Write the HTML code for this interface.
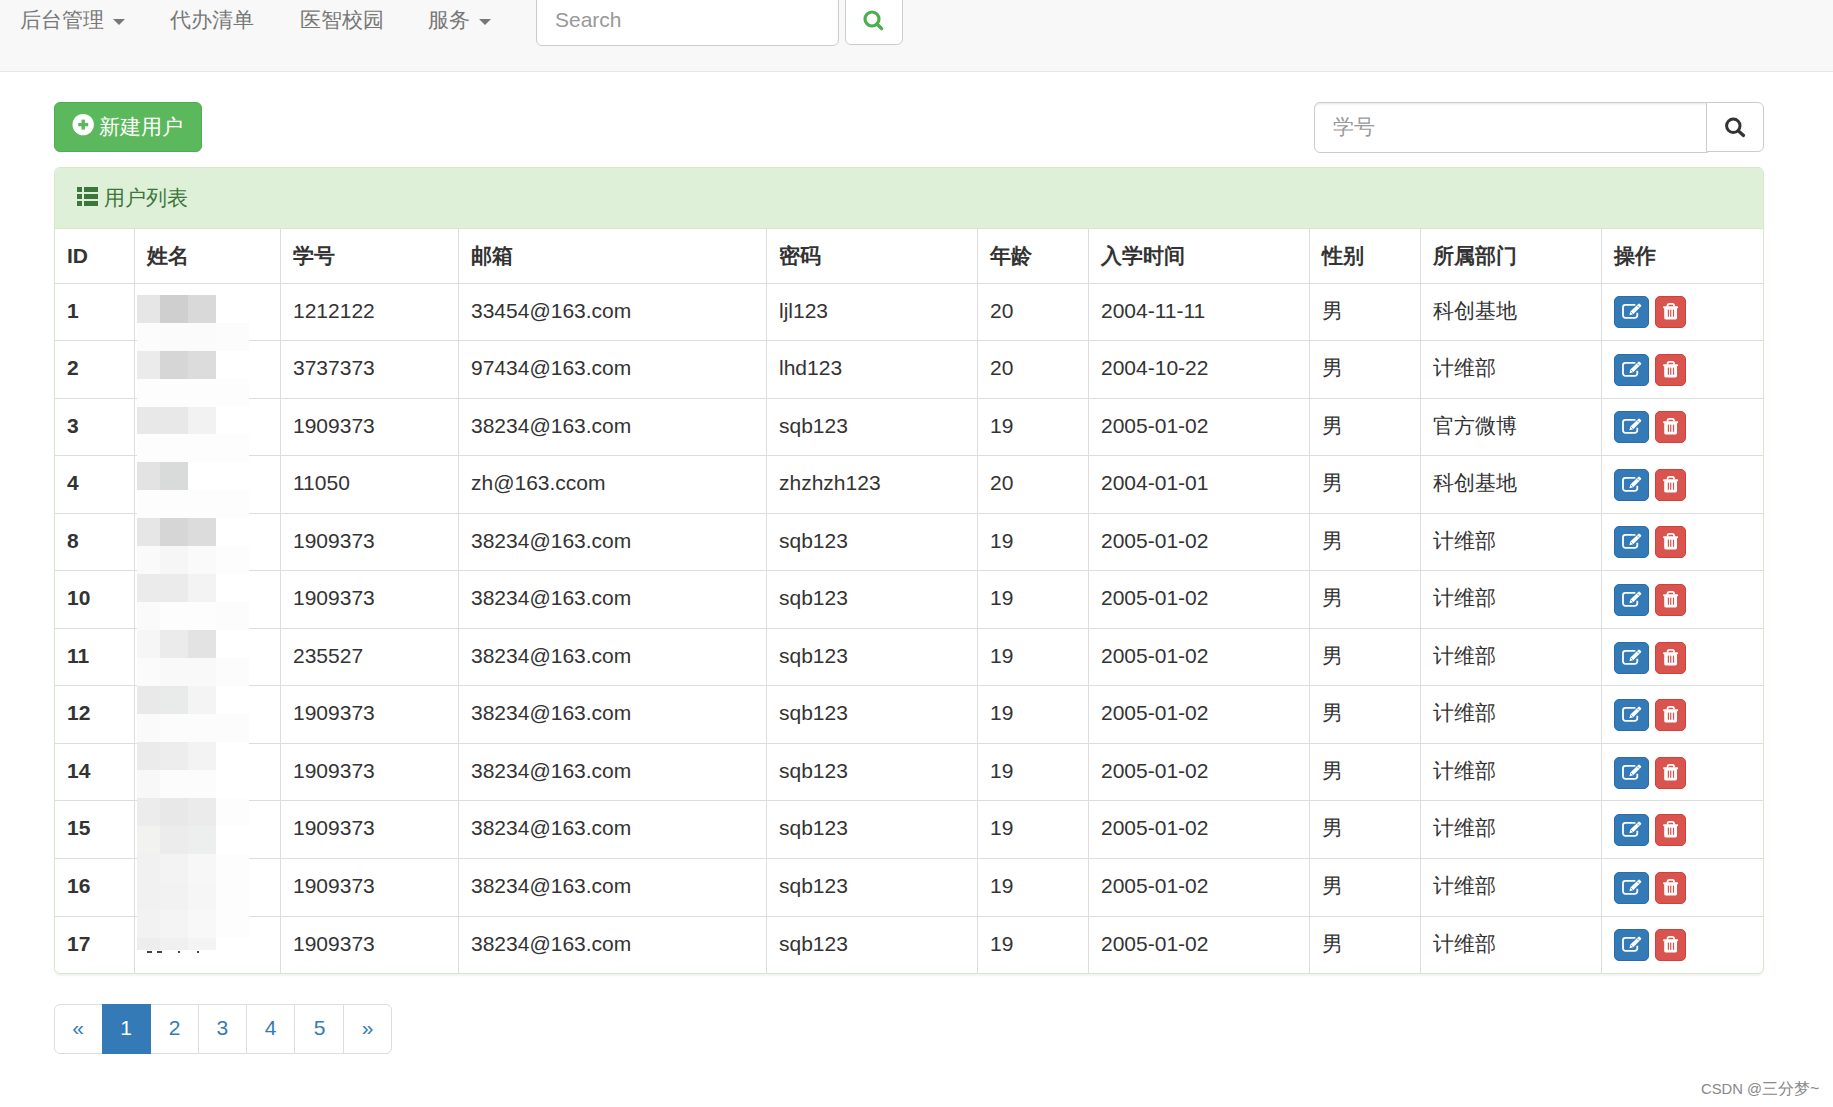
<!DOCTYPE html><html><head><meta charset="utf-8"><style>
*{margin:0;padding:0;box-sizing:border-box}
html,body{width:1833px;height:1107px;overflow:hidden;background:#fff}
body{font-family:"Liberation Sans",sans-serif;font-size:21px;color:#333;position:relative}
.a{position:absolute}
.nav{left:0;top:0;width:1833px;height:72px;background:#f8f8f8;border-bottom:1px solid #e7e7e7}
.ni{color:#777;font-size:21px;line-height:21px;top:9px;white-space:nowrap}
.caret{width:0;height:0;border-left:6px solid transparent;border-right:6px solid transparent;border-top:6px solid #777}
.inp{background:#fff;border:1.5px solid #ccc;border-radius:6px}
.sh{box-shadow:inset 0 1.5px 1.5px rgba(0,0,0,.075)}
.ph{color:#999;font-size:21px;line-height:21px;white-space:nowrap}
.btn-s{background:#5cb85c;border:1.5px solid #4cae4c;border-radius:6px}
.panel{left:54px;top:167px;width:1710px;height:807px;border:1px solid #d6e9c6;border-radius:6px;overflow:hidden;background:#fff;box-shadow:0 1.5px 1.5px rgba(0,0,0,.05)}
.ph2{left:0;top:0;width:100%;height:61px;background:#dff0d8;border-bottom:1px solid #d6e9c6}
.hl{height:1px;background:#ddd}
.vl{width:1px;background:#ddd}
.t{white-space:nowrap;line-height:21px}
.th{font-weight:bold}
.be{width:35px;height:32px;background:#337ab7;border:1px solid #2e6da4;border-radius:5px}
.bd{width:31px;height:32px;background:#d9534f;border:1px solid #d43f3a;border-radius:5px}
.pg{top:1004px;height:50px;border:1.5px solid #ddd;color:#337ab7;font-size:21px;text-align:center;line-height:47px}
</style></head><body>
<div class="a nav"></div>
<div class="a ni" style="left:20px">后台管理</div><div class="a caret" style="left:113px;top:19px"></div>
<div class="a ni" style="left:170px">代办清单</div>
<div class="a ni" style="left:300px">医智校园</div>
<div class="a ni" style="left:428px">服务</div><div class="a caret" style="left:479px;top:19px"></div>
<div class="a inp sh" style="left:536px;top:-10px;width:303px;height:56px"></div>
<div class="a ph" style="left:555px;top:9px">Search</div>
<div class="a inp" style="left:845px;top:-10px;width:58px;height:55px"></div>
<svg class="a" style="left:860px;top:8px" width="28" height="28" viewBox="0 0 28 28"><circle cx="12" cy="11" r="7" fill="none" stroke="#4cae4c" stroke-width="3.2"/><line x1="17" y1="16" x2="21.6" y2="20.6" stroke="#4cae4c" stroke-width="3.4" stroke-linecap="round"/></svg>
<div class="a btn-s" style="left:54px;top:102px;width:148px;height:50px"></div>
<svg class="a" style="left:72px;top:113px" width="23" height="23" viewBox="0 0 23 23"><circle cx="11.2" cy="11.6" r="10.7" fill="#fff"/><rect x="9.5" y="6.6" width="3.4" height="10" fill="#5cb85c"/><rect x="6.2" y="9.9" width="10" height="3.4" fill="#5cb85c"/></svg>
<div class="a t" style="left:99px;top:116px;color:#fff">新建用户</div>
<div class="a inp sh" style="left:1314px;top:102px;width:394px;height:51px;border-radius:6px 0 0 6px"></div>
<div class="a ph" style="left:1333px;top:116px">学号</div>
<div class="a inp" style="left:1706px;top:102px;width:58px;height:50px;border-radius:0 6px 6px 0"></div>
<svg class="a" style="left:1722px;top:114px" width="26" height="26" viewBox="0 0 26 26"><circle cx="11.3" cy="11.8" r="6.7" fill="none" stroke="#333" stroke-width="3"/><line x1="16.5" y1="17" x2="21.5" y2="21.5" stroke="#333" stroke-width="3.2" stroke-linecap="round"/></svg>
<div class="a panel">
<div class="a ph2"></div>
</div>
<svg class="a" style="left:77px;top:187px" width="22" height="20" viewBox="0 0 22 20"><g fill="#3c763d"><rect x="0" y="0" width="5" height="5"/><rect x="7" y="0" width="14" height="5"/><rect x="0" y="7" width="5" height="5"/><rect x="7" y="7" width="14" height="5"/><rect x="0" y="14" width="5" height="5"/><rect x="7" y="14" width="14" height="5"/></g></svg>
<div class="a t" style="left:104px;top:187px;color:#3c763d">用户列表</div>
<div class="a vl" style="left:134px;top:229px;height:744px"></div>
<div class="a vl" style="left:280px;top:229px;height:744px"></div>
<div class="a vl" style="left:458px;top:229px;height:744px"></div>
<div class="a vl" style="left:766px;top:229px;height:744px"></div>
<div class="a vl" style="left:977px;top:229px;height:744px"></div>
<div class="a vl" style="left:1088px;top:229px;height:744px"></div>
<div class="a vl" style="left:1309px;top:229px;height:744px"></div>
<div class="a vl" style="left:1420px;top:229px;height:744px"></div>
<div class="a vl" style="left:1601px;top:229px;height:744px"></div>
<div class="a hl" style="left:55px;top:283px;width:1708px"></div>
<div class="a hl" style="left:55px;top:340px;width:1708px"></div>
<div class="a hl" style="left:55px;top:398px;width:1708px"></div>
<div class="a hl" style="left:55px;top:455px;width:1708px"></div>
<div class="a hl" style="left:55px;top:513px;width:1708px"></div>
<div class="a hl" style="left:55px;top:570px;width:1708px"></div>
<div class="a hl" style="left:55px;top:628px;width:1708px"></div>
<div class="a hl" style="left:55px;top:685px;width:1708px"></div>
<div class="a hl" style="left:55px;top:743px;width:1708px"></div>
<div class="a hl" style="left:55px;top:800px;width:1708px"></div>
<div class="a hl" style="left:55px;top:858px;width:1708px"></div>
<div class="a hl" style="left:55px;top:916px;width:1708px"></div>
<div class="a t th" style="left:67px;top:245.0px">ID</div>
<div class="a t th" style="left:147px;top:245.0px">姓名</div>
<div class="a t th" style="left:293px;top:245.0px">学号</div>
<div class="a t th" style="left:471px;top:245.0px">邮箱</div>
<div class="a t th" style="left:779px;top:245.0px">密码</div>
<div class="a t th" style="left:990px;top:245.0px">年龄</div>
<div class="a t th" style="left:1101px;top:245.0px">入学时间</div>
<div class="a t th" style="left:1322px;top:245.0px">性别</div>
<div class="a t th" style="left:1433px;top:245.0px">所属部门</div>
<div class="a t th" style="left:1614px;top:245.0px">操作</div>
<div class="a t th" style="left:67px;top:300.2px">1</div>
<div class="a t" style="left:293px;top:300.2px">1212122</div>
<div class="a t" style="left:471px;top:300.2px">33454@163.com</div>
<div class="a t" style="left:779px;top:300.2px">ljl123</div>
<div class="a t" style="left:990px;top:300.2px">20</div>
<div class="a t" style="left:1101px;top:300.2px">2004-11-11</div>
<div class="a t" style="left:1322px;top:300.2px">男</div>
<div class="a t" style="left:1433px;top:300.2px">科创基地</div>
<div class="a be" style="left:1614px;top:296.0px"><svg class="a" style="left:-1px;top:-1px" width="35" height="32" viewBox="0 0 35 32"><path d="M21.4 8.9 H11.4 A2.4 2.4 0 0 0 9 11.3 V19.5 A2.4 2.4 0 0 0 11.4 21.9 H20.9 A2.4 2.4 0 0 0 23.3 19.5 V16.8" fill="none" stroke="#fff" stroke-width="1.8"/><path d="M15.4 19.2 L16.4 15.4 L24.2 7.9 A1.2 1.2 0 0 1 25.9 7.9 L26.9 8.9 A1.2 1.2 0 0 1 26.9 10.6 L19.2 18.2 Z" fill="#fff"/><line x1="17.2" y1="16.2" x2="18.6" y2="17.6" stroke="#337ab7" stroke-width="0.9"/><line x1="23.2" y1="9.6" x2="25.2" y2="11.6" stroke="#337ab7" stroke-width="0.8"/></svg></div>
<div class="a bd" style="left:1655px;top:296.0px"><svg class="a" style="left:-1px;top:-1px" width="31" height="32" viewBox="0 0 31 32"><rect x="8.1" y="10.3" width="15" height="2" rx="0.8" fill="#fff"/><path d="M12.6 10.5 V9.5 A1.6 1.6 0 0 1 14.2 7.9 H17.4 A1.6 1.6 0 0 1 19 9.5 V10.5" fill="none" stroke="#fff" stroke-width="1.8"/><path d="M9.2 12 H22 V22 A1.4 1.4 0 0 1 20.6 23.4 H10.6 A1.4 1.4 0 0 1 9.2 22 Z" fill="#fff"/><g fill="#d9534f"><rect x="12.8" y="13.6" width="1.2" height="7.2"/><rect x="15.1" y="13.6" width="1.2" height="7.2"/><rect x="17.9" y="13.6" width="1.2" height="7.2"/></g></svg></div>
<div class="a t th" style="left:67px;top:357.2px">2</div>
<div class="a t" style="left:293px;top:357.2px">3737373</div>
<div class="a t" style="left:471px;top:357.2px">97434@163.com</div>
<div class="a t" style="left:779px;top:357.2px">lhd123</div>
<div class="a t" style="left:990px;top:357.2px">20</div>
<div class="a t" style="left:1101px;top:357.2px">2004-10-22</div>
<div class="a t" style="left:1322px;top:357.2px">男</div>
<div class="a t" style="left:1433px;top:357.2px">计维部</div>
<div class="a be" style="left:1614px;top:354.0px"><svg class="a" style="left:-1px;top:-1px" width="35" height="32" viewBox="0 0 35 32"><path d="M21.4 8.9 H11.4 A2.4 2.4 0 0 0 9 11.3 V19.5 A2.4 2.4 0 0 0 11.4 21.9 H20.9 A2.4 2.4 0 0 0 23.3 19.5 V16.8" fill="none" stroke="#fff" stroke-width="1.8"/><path d="M15.4 19.2 L16.4 15.4 L24.2 7.9 A1.2 1.2 0 0 1 25.9 7.9 L26.9 8.9 A1.2 1.2 0 0 1 26.9 10.6 L19.2 18.2 Z" fill="#fff"/><line x1="17.2" y1="16.2" x2="18.6" y2="17.6" stroke="#337ab7" stroke-width="0.9"/><line x1="23.2" y1="9.6" x2="25.2" y2="11.6" stroke="#337ab7" stroke-width="0.8"/></svg></div>
<div class="a bd" style="left:1655px;top:354.0px"><svg class="a" style="left:-1px;top:-1px" width="31" height="32" viewBox="0 0 31 32"><rect x="8.1" y="10.3" width="15" height="2" rx="0.8" fill="#fff"/><path d="M12.6 10.5 V9.5 A1.6 1.6 0 0 1 14.2 7.9 H17.4 A1.6 1.6 0 0 1 19 9.5 V10.5" fill="none" stroke="#fff" stroke-width="1.8"/><path d="M9.2 12 H22 V22 A1.4 1.4 0 0 1 20.6 23.4 H10.6 A1.4 1.4 0 0 1 9.2 22 Z" fill="#fff"/><g fill="#d9534f"><rect x="12.8" y="13.6" width="1.2" height="7.2"/><rect x="15.1" y="13.6" width="1.2" height="7.2"/><rect x="17.9" y="13.6" width="1.2" height="7.2"/></g></svg></div>
<div class="a t th" style="left:67px;top:415.2px">3</div>
<div class="a t" style="left:293px;top:415.2px">1909373</div>
<div class="a t" style="left:471px;top:415.2px">38234@163.com</div>
<div class="a t" style="left:779px;top:415.2px">sqb123</div>
<div class="a t" style="left:990px;top:415.2px">19</div>
<div class="a t" style="left:1101px;top:415.2px">2005-01-02</div>
<div class="a t" style="left:1322px;top:415.2px">男</div>
<div class="a t" style="left:1433px;top:415.2px">官方微博</div>
<div class="a be" style="left:1614px;top:411.0px"><svg class="a" style="left:-1px;top:-1px" width="35" height="32" viewBox="0 0 35 32"><path d="M21.4 8.9 H11.4 A2.4 2.4 0 0 0 9 11.3 V19.5 A2.4 2.4 0 0 0 11.4 21.9 H20.9 A2.4 2.4 0 0 0 23.3 19.5 V16.8" fill="none" stroke="#fff" stroke-width="1.8"/><path d="M15.4 19.2 L16.4 15.4 L24.2 7.9 A1.2 1.2 0 0 1 25.9 7.9 L26.9 8.9 A1.2 1.2 0 0 1 26.9 10.6 L19.2 18.2 Z" fill="#fff"/><line x1="17.2" y1="16.2" x2="18.6" y2="17.6" stroke="#337ab7" stroke-width="0.9"/><line x1="23.2" y1="9.6" x2="25.2" y2="11.6" stroke="#337ab7" stroke-width="0.8"/></svg></div>
<div class="a bd" style="left:1655px;top:411.0px"><svg class="a" style="left:-1px;top:-1px" width="31" height="32" viewBox="0 0 31 32"><rect x="8.1" y="10.3" width="15" height="2" rx="0.8" fill="#fff"/><path d="M12.6 10.5 V9.5 A1.6 1.6 0 0 1 14.2 7.9 H17.4 A1.6 1.6 0 0 1 19 9.5 V10.5" fill="none" stroke="#fff" stroke-width="1.8"/><path d="M9.2 12 H22 V22 A1.4 1.4 0 0 1 20.6 23.4 H10.6 A1.4 1.4 0 0 1 9.2 22 Z" fill="#fff"/><g fill="#d9534f"><rect x="12.8" y="13.6" width="1.2" height="7.2"/><rect x="15.1" y="13.6" width="1.2" height="7.2"/><rect x="17.9" y="13.6" width="1.2" height="7.2"/></g></svg></div>
<div class="a t th" style="left:67px;top:472.2px">4</div>
<div class="a t" style="left:293px;top:472.2px">11050</div>
<div class="a t" style="left:471px;top:472.2px">zh@163.ccom</div>
<div class="a t" style="left:779px;top:472.2px">zhzhzh123</div>
<div class="a t" style="left:990px;top:472.2px">20</div>
<div class="a t" style="left:1101px;top:472.2px">2004-01-01</div>
<div class="a t" style="left:1322px;top:472.2px">男</div>
<div class="a t" style="left:1433px;top:472.2px">科创基地</div>
<div class="a be" style="left:1614px;top:469.0px"><svg class="a" style="left:-1px;top:-1px" width="35" height="32" viewBox="0 0 35 32"><path d="M21.4 8.9 H11.4 A2.4 2.4 0 0 0 9 11.3 V19.5 A2.4 2.4 0 0 0 11.4 21.9 H20.9 A2.4 2.4 0 0 0 23.3 19.5 V16.8" fill="none" stroke="#fff" stroke-width="1.8"/><path d="M15.4 19.2 L16.4 15.4 L24.2 7.9 A1.2 1.2 0 0 1 25.9 7.9 L26.9 8.9 A1.2 1.2 0 0 1 26.9 10.6 L19.2 18.2 Z" fill="#fff"/><line x1="17.2" y1="16.2" x2="18.6" y2="17.6" stroke="#337ab7" stroke-width="0.9"/><line x1="23.2" y1="9.6" x2="25.2" y2="11.6" stroke="#337ab7" stroke-width="0.8"/></svg></div>
<div class="a bd" style="left:1655px;top:469.0px"><svg class="a" style="left:-1px;top:-1px" width="31" height="32" viewBox="0 0 31 32"><rect x="8.1" y="10.3" width="15" height="2" rx="0.8" fill="#fff"/><path d="M12.6 10.5 V9.5 A1.6 1.6 0 0 1 14.2 7.9 H17.4 A1.6 1.6 0 0 1 19 9.5 V10.5" fill="none" stroke="#fff" stroke-width="1.8"/><path d="M9.2 12 H22 V22 A1.4 1.4 0 0 1 20.6 23.4 H10.6 A1.4 1.4 0 0 1 9.2 22 Z" fill="#fff"/><g fill="#d9534f"><rect x="12.8" y="13.6" width="1.2" height="7.2"/><rect x="15.1" y="13.6" width="1.2" height="7.2"/><rect x="17.9" y="13.6" width="1.2" height="7.2"/></g></svg></div>
<div class="a t th" style="left:67px;top:530.2px">8</div>
<div class="a t" style="left:293px;top:530.2px">1909373</div>
<div class="a t" style="left:471px;top:530.2px">38234@163.com</div>
<div class="a t" style="left:779px;top:530.2px">sqb123</div>
<div class="a t" style="left:990px;top:530.2px">19</div>
<div class="a t" style="left:1101px;top:530.2px">2005-01-02</div>
<div class="a t" style="left:1322px;top:530.2px">男</div>
<div class="a t" style="left:1433px;top:530.2px">计维部</div>
<div class="a be" style="left:1614px;top:526.0px"><svg class="a" style="left:-1px;top:-1px" width="35" height="32" viewBox="0 0 35 32"><path d="M21.4 8.9 H11.4 A2.4 2.4 0 0 0 9 11.3 V19.5 A2.4 2.4 0 0 0 11.4 21.9 H20.9 A2.4 2.4 0 0 0 23.3 19.5 V16.8" fill="none" stroke="#fff" stroke-width="1.8"/><path d="M15.4 19.2 L16.4 15.4 L24.2 7.9 A1.2 1.2 0 0 1 25.9 7.9 L26.9 8.9 A1.2 1.2 0 0 1 26.9 10.6 L19.2 18.2 Z" fill="#fff"/><line x1="17.2" y1="16.2" x2="18.6" y2="17.6" stroke="#337ab7" stroke-width="0.9"/><line x1="23.2" y1="9.6" x2="25.2" y2="11.6" stroke="#337ab7" stroke-width="0.8"/></svg></div>
<div class="a bd" style="left:1655px;top:526.0px"><svg class="a" style="left:-1px;top:-1px" width="31" height="32" viewBox="0 0 31 32"><rect x="8.1" y="10.3" width="15" height="2" rx="0.8" fill="#fff"/><path d="M12.6 10.5 V9.5 A1.6 1.6 0 0 1 14.2 7.9 H17.4 A1.6 1.6 0 0 1 19 9.5 V10.5" fill="none" stroke="#fff" stroke-width="1.8"/><path d="M9.2 12 H22 V22 A1.4 1.4 0 0 1 20.6 23.4 H10.6 A1.4 1.4 0 0 1 9.2 22 Z" fill="#fff"/><g fill="#d9534f"><rect x="12.8" y="13.6" width="1.2" height="7.2"/><rect x="15.1" y="13.6" width="1.2" height="7.2"/><rect x="17.9" y="13.6" width="1.2" height="7.2"/></g></svg></div>
<div class="a t th" style="left:67px;top:587.2px">10</div>
<div class="a t" style="left:293px;top:587.2px">1909373</div>
<div class="a t" style="left:471px;top:587.2px">38234@163.com</div>
<div class="a t" style="left:779px;top:587.2px">sqb123</div>
<div class="a t" style="left:990px;top:587.2px">19</div>
<div class="a t" style="left:1101px;top:587.2px">2005-01-02</div>
<div class="a t" style="left:1322px;top:587.2px">男</div>
<div class="a t" style="left:1433px;top:587.2px">计维部</div>
<div class="a be" style="left:1614px;top:584.0px"><svg class="a" style="left:-1px;top:-1px" width="35" height="32" viewBox="0 0 35 32"><path d="M21.4 8.9 H11.4 A2.4 2.4 0 0 0 9 11.3 V19.5 A2.4 2.4 0 0 0 11.4 21.9 H20.9 A2.4 2.4 0 0 0 23.3 19.5 V16.8" fill="none" stroke="#fff" stroke-width="1.8"/><path d="M15.4 19.2 L16.4 15.4 L24.2 7.9 A1.2 1.2 0 0 1 25.9 7.9 L26.9 8.9 A1.2 1.2 0 0 1 26.9 10.6 L19.2 18.2 Z" fill="#fff"/><line x1="17.2" y1="16.2" x2="18.6" y2="17.6" stroke="#337ab7" stroke-width="0.9"/><line x1="23.2" y1="9.6" x2="25.2" y2="11.6" stroke="#337ab7" stroke-width="0.8"/></svg></div>
<div class="a bd" style="left:1655px;top:584.0px"><svg class="a" style="left:-1px;top:-1px" width="31" height="32" viewBox="0 0 31 32"><rect x="8.1" y="10.3" width="15" height="2" rx="0.8" fill="#fff"/><path d="M12.6 10.5 V9.5 A1.6 1.6 0 0 1 14.2 7.9 H17.4 A1.6 1.6 0 0 1 19 9.5 V10.5" fill="none" stroke="#fff" stroke-width="1.8"/><path d="M9.2 12 H22 V22 A1.4 1.4 0 0 1 20.6 23.4 H10.6 A1.4 1.4 0 0 1 9.2 22 Z" fill="#fff"/><g fill="#d9534f"><rect x="12.8" y="13.6" width="1.2" height="7.2"/><rect x="15.1" y="13.6" width="1.2" height="7.2"/><rect x="17.9" y="13.6" width="1.2" height="7.2"/></g></svg></div>
<div class="a t th" style="left:67px;top:645.2px">11</div>
<div class="a t" style="left:293px;top:645.2px">235527</div>
<div class="a t" style="left:471px;top:645.2px">38234@163.com</div>
<div class="a t" style="left:779px;top:645.2px">sqb123</div>
<div class="a t" style="left:990px;top:645.2px">19</div>
<div class="a t" style="left:1101px;top:645.2px">2005-01-02</div>
<div class="a t" style="left:1322px;top:645.2px">男</div>
<div class="a t" style="left:1433px;top:645.2px">计维部</div>
<div class="a be" style="left:1614px;top:642.0px"><svg class="a" style="left:-1px;top:-1px" width="35" height="32" viewBox="0 0 35 32"><path d="M21.4 8.9 H11.4 A2.4 2.4 0 0 0 9 11.3 V19.5 A2.4 2.4 0 0 0 11.4 21.9 H20.9 A2.4 2.4 0 0 0 23.3 19.5 V16.8" fill="none" stroke="#fff" stroke-width="1.8"/><path d="M15.4 19.2 L16.4 15.4 L24.2 7.9 A1.2 1.2 0 0 1 25.9 7.9 L26.9 8.9 A1.2 1.2 0 0 1 26.9 10.6 L19.2 18.2 Z" fill="#fff"/><line x1="17.2" y1="16.2" x2="18.6" y2="17.6" stroke="#337ab7" stroke-width="0.9"/><line x1="23.2" y1="9.6" x2="25.2" y2="11.6" stroke="#337ab7" stroke-width="0.8"/></svg></div>
<div class="a bd" style="left:1655px;top:642.0px"><svg class="a" style="left:-1px;top:-1px" width="31" height="32" viewBox="0 0 31 32"><rect x="8.1" y="10.3" width="15" height="2" rx="0.8" fill="#fff"/><path d="M12.6 10.5 V9.5 A1.6 1.6 0 0 1 14.2 7.9 H17.4 A1.6 1.6 0 0 1 19 9.5 V10.5" fill="none" stroke="#fff" stroke-width="1.8"/><path d="M9.2 12 H22 V22 A1.4 1.4 0 0 1 20.6 23.4 H10.6 A1.4 1.4 0 0 1 9.2 22 Z" fill="#fff"/><g fill="#d9534f"><rect x="12.8" y="13.6" width="1.2" height="7.2"/><rect x="15.1" y="13.6" width="1.2" height="7.2"/><rect x="17.9" y="13.6" width="1.2" height="7.2"/></g></svg></div>
<div class="a t th" style="left:67px;top:702.2px">12</div>
<div class="a t" style="left:293px;top:702.2px">1909373</div>
<div class="a t" style="left:471px;top:702.2px">38234@163.com</div>
<div class="a t" style="left:779px;top:702.2px">sqb123</div>
<div class="a t" style="left:990px;top:702.2px">19</div>
<div class="a t" style="left:1101px;top:702.2px">2005-01-02</div>
<div class="a t" style="left:1322px;top:702.2px">男</div>
<div class="a t" style="left:1433px;top:702.2px">计维部</div>
<div class="a be" style="left:1614px;top:699.0px"><svg class="a" style="left:-1px;top:-1px" width="35" height="32" viewBox="0 0 35 32"><path d="M21.4 8.9 H11.4 A2.4 2.4 0 0 0 9 11.3 V19.5 A2.4 2.4 0 0 0 11.4 21.9 H20.9 A2.4 2.4 0 0 0 23.3 19.5 V16.8" fill="none" stroke="#fff" stroke-width="1.8"/><path d="M15.4 19.2 L16.4 15.4 L24.2 7.9 A1.2 1.2 0 0 1 25.9 7.9 L26.9 8.9 A1.2 1.2 0 0 1 26.9 10.6 L19.2 18.2 Z" fill="#fff"/><line x1="17.2" y1="16.2" x2="18.6" y2="17.6" stroke="#337ab7" stroke-width="0.9"/><line x1="23.2" y1="9.6" x2="25.2" y2="11.6" stroke="#337ab7" stroke-width="0.8"/></svg></div>
<div class="a bd" style="left:1655px;top:699.0px"><svg class="a" style="left:-1px;top:-1px" width="31" height="32" viewBox="0 0 31 32"><rect x="8.1" y="10.3" width="15" height="2" rx="0.8" fill="#fff"/><path d="M12.6 10.5 V9.5 A1.6 1.6 0 0 1 14.2 7.9 H17.4 A1.6 1.6 0 0 1 19 9.5 V10.5" fill="none" stroke="#fff" stroke-width="1.8"/><path d="M9.2 12 H22 V22 A1.4 1.4 0 0 1 20.6 23.4 H10.6 A1.4 1.4 0 0 1 9.2 22 Z" fill="#fff"/><g fill="#d9534f"><rect x="12.8" y="13.6" width="1.2" height="7.2"/><rect x="15.1" y="13.6" width="1.2" height="7.2"/><rect x="17.9" y="13.6" width="1.2" height="7.2"/></g></svg></div>
<div class="a t th" style="left:67px;top:760.2px">14</div>
<div class="a t" style="left:293px;top:760.2px">1909373</div>
<div class="a t" style="left:471px;top:760.2px">38234@163.com</div>
<div class="a t" style="left:779px;top:760.2px">sqb123</div>
<div class="a t" style="left:990px;top:760.2px">19</div>
<div class="a t" style="left:1101px;top:760.2px">2005-01-02</div>
<div class="a t" style="left:1322px;top:760.2px">男</div>
<div class="a t" style="left:1433px;top:760.2px">计维部</div>
<div class="a be" style="left:1614px;top:757.0px"><svg class="a" style="left:-1px;top:-1px" width="35" height="32" viewBox="0 0 35 32"><path d="M21.4 8.9 H11.4 A2.4 2.4 0 0 0 9 11.3 V19.5 A2.4 2.4 0 0 0 11.4 21.9 H20.9 A2.4 2.4 0 0 0 23.3 19.5 V16.8" fill="none" stroke="#fff" stroke-width="1.8"/><path d="M15.4 19.2 L16.4 15.4 L24.2 7.9 A1.2 1.2 0 0 1 25.9 7.9 L26.9 8.9 A1.2 1.2 0 0 1 26.9 10.6 L19.2 18.2 Z" fill="#fff"/><line x1="17.2" y1="16.2" x2="18.6" y2="17.6" stroke="#337ab7" stroke-width="0.9"/><line x1="23.2" y1="9.6" x2="25.2" y2="11.6" stroke="#337ab7" stroke-width="0.8"/></svg></div>
<div class="a bd" style="left:1655px;top:757.0px"><svg class="a" style="left:-1px;top:-1px" width="31" height="32" viewBox="0 0 31 32"><rect x="8.1" y="10.3" width="15" height="2" rx="0.8" fill="#fff"/><path d="M12.6 10.5 V9.5 A1.6 1.6 0 0 1 14.2 7.9 H17.4 A1.6 1.6 0 0 1 19 9.5 V10.5" fill="none" stroke="#fff" stroke-width="1.8"/><path d="M9.2 12 H22 V22 A1.4 1.4 0 0 1 20.6 23.4 H10.6 A1.4 1.4 0 0 1 9.2 22 Z" fill="#fff"/><g fill="#d9534f"><rect x="12.8" y="13.6" width="1.2" height="7.2"/><rect x="15.1" y="13.6" width="1.2" height="7.2"/><rect x="17.9" y="13.6" width="1.2" height="7.2"/></g></svg></div>
<div class="a t th" style="left:67px;top:817.2px">15</div>
<div class="a t" style="left:293px;top:817.2px">1909373</div>
<div class="a t" style="left:471px;top:817.2px">38234@163.com</div>
<div class="a t" style="left:779px;top:817.2px">sqb123</div>
<div class="a t" style="left:990px;top:817.2px">19</div>
<div class="a t" style="left:1101px;top:817.2px">2005-01-02</div>
<div class="a t" style="left:1322px;top:817.2px">男</div>
<div class="a t" style="left:1433px;top:817.2px">计维部</div>
<div class="a be" style="left:1614px;top:814.0px"><svg class="a" style="left:-1px;top:-1px" width="35" height="32" viewBox="0 0 35 32"><path d="M21.4 8.9 H11.4 A2.4 2.4 0 0 0 9 11.3 V19.5 A2.4 2.4 0 0 0 11.4 21.9 H20.9 A2.4 2.4 0 0 0 23.3 19.5 V16.8" fill="none" stroke="#fff" stroke-width="1.8"/><path d="M15.4 19.2 L16.4 15.4 L24.2 7.9 A1.2 1.2 0 0 1 25.9 7.9 L26.9 8.9 A1.2 1.2 0 0 1 26.9 10.6 L19.2 18.2 Z" fill="#fff"/><line x1="17.2" y1="16.2" x2="18.6" y2="17.6" stroke="#337ab7" stroke-width="0.9"/><line x1="23.2" y1="9.6" x2="25.2" y2="11.6" stroke="#337ab7" stroke-width="0.8"/></svg></div>
<div class="a bd" style="left:1655px;top:814.0px"><svg class="a" style="left:-1px;top:-1px" width="31" height="32" viewBox="0 0 31 32"><rect x="8.1" y="10.3" width="15" height="2" rx="0.8" fill="#fff"/><path d="M12.6 10.5 V9.5 A1.6 1.6 0 0 1 14.2 7.9 H17.4 A1.6 1.6 0 0 1 19 9.5 V10.5" fill="none" stroke="#fff" stroke-width="1.8"/><path d="M9.2 12 H22 V22 A1.4 1.4 0 0 1 20.6 23.4 H10.6 A1.4 1.4 0 0 1 9.2 22 Z" fill="#fff"/><g fill="#d9534f"><rect x="12.8" y="13.6" width="1.2" height="7.2"/><rect x="15.1" y="13.6" width="1.2" height="7.2"/><rect x="17.9" y="13.6" width="1.2" height="7.2"/></g></svg></div>
<div class="a t th" style="left:67px;top:875.2px">16</div>
<div class="a t" style="left:293px;top:875.2px">1909373</div>
<div class="a t" style="left:471px;top:875.2px">38234@163.com</div>
<div class="a t" style="left:779px;top:875.2px">sqb123</div>
<div class="a t" style="left:990px;top:875.2px">19</div>
<div class="a t" style="left:1101px;top:875.2px">2005-01-02</div>
<div class="a t" style="left:1322px;top:875.2px">男</div>
<div class="a t" style="left:1433px;top:875.2px">计维部</div>
<div class="a be" style="left:1614px;top:872.0px"><svg class="a" style="left:-1px;top:-1px" width="35" height="32" viewBox="0 0 35 32"><path d="M21.4 8.9 H11.4 A2.4 2.4 0 0 0 9 11.3 V19.5 A2.4 2.4 0 0 0 11.4 21.9 H20.9 A2.4 2.4 0 0 0 23.3 19.5 V16.8" fill="none" stroke="#fff" stroke-width="1.8"/><path d="M15.4 19.2 L16.4 15.4 L24.2 7.9 A1.2 1.2 0 0 1 25.9 7.9 L26.9 8.9 A1.2 1.2 0 0 1 26.9 10.6 L19.2 18.2 Z" fill="#fff"/><line x1="17.2" y1="16.2" x2="18.6" y2="17.6" stroke="#337ab7" stroke-width="0.9"/><line x1="23.2" y1="9.6" x2="25.2" y2="11.6" stroke="#337ab7" stroke-width="0.8"/></svg></div>
<div class="a bd" style="left:1655px;top:872.0px"><svg class="a" style="left:-1px;top:-1px" width="31" height="32" viewBox="0 0 31 32"><rect x="8.1" y="10.3" width="15" height="2" rx="0.8" fill="#fff"/><path d="M12.6 10.5 V9.5 A1.6 1.6 0 0 1 14.2 7.9 H17.4 A1.6 1.6 0 0 1 19 9.5 V10.5" fill="none" stroke="#fff" stroke-width="1.8"/><path d="M9.2 12 H22 V22 A1.4 1.4 0 0 1 20.6 23.4 H10.6 A1.4 1.4 0 0 1 9.2 22 Z" fill="#fff"/><g fill="#d9534f"><rect x="12.8" y="13.6" width="1.2" height="7.2"/><rect x="15.1" y="13.6" width="1.2" height="7.2"/><rect x="17.9" y="13.6" width="1.2" height="7.2"/></g></svg></div>
<div class="a t th" style="left:67px;top:933.2px">17</div>
<div class="a t" style="left:293px;top:933.2px">1909373</div>
<div class="a t" style="left:471px;top:933.2px">38234@163.com</div>
<div class="a t" style="left:779px;top:933.2px">sqb123</div>
<div class="a t" style="left:990px;top:933.2px">19</div>
<div class="a t" style="left:1101px;top:933.2px">2005-01-02</div>
<div class="a t" style="left:1322px;top:933.2px">男</div>
<div class="a t" style="left:1433px;top:933.2px">计维部</div>
<div class="a be" style="left:1614px;top:929.0px"><svg class="a" style="left:-1px;top:-1px" width="35" height="32" viewBox="0 0 35 32"><path d="M21.4 8.9 H11.4 A2.4 2.4 0 0 0 9 11.3 V19.5 A2.4 2.4 0 0 0 11.4 21.9 H20.9 A2.4 2.4 0 0 0 23.3 19.5 V16.8" fill="none" stroke="#fff" stroke-width="1.8"/><path d="M15.4 19.2 L16.4 15.4 L24.2 7.9 A1.2 1.2 0 0 1 25.9 7.9 L26.9 8.9 A1.2 1.2 0 0 1 26.9 10.6 L19.2 18.2 Z" fill="#fff"/><line x1="17.2" y1="16.2" x2="18.6" y2="17.6" stroke="#337ab7" stroke-width="0.9"/><line x1="23.2" y1="9.6" x2="25.2" y2="11.6" stroke="#337ab7" stroke-width="0.8"/></svg></div>
<div class="a bd" style="left:1655px;top:929.0px"><svg class="a" style="left:-1px;top:-1px" width="31" height="32" viewBox="0 0 31 32"><rect x="8.1" y="10.3" width="15" height="2" rx="0.8" fill="#fff"/><path d="M12.6 10.5 V9.5 A1.6 1.6 0 0 1 14.2 7.9 H17.4 A1.6 1.6 0 0 1 19 9.5 V10.5" fill="none" stroke="#fff" stroke-width="1.8"/><path d="M9.2 12 H22 V22 A1.4 1.4 0 0 1 20.6 23.4 H10.6 A1.4 1.4 0 0 1 9.2 22 Z" fill="#fff"/><g fill="#d9534f"><rect x="12.8" y="13.6" width="1.2" height="7.2"/><rect x="15.1" y="13.6" width="1.2" height="7.2"/><rect x="17.9" y="13.6" width="1.2" height="7.2"/></g></svg></div>
<div class="a" style="left:137px;top:294.7px;width:23px;height:28.4px;background:#e6e6e6"></div>
<div class="a" style="left:160px;top:294.7px;width:28px;height:28.4px;background:#cfcfcf"></div>
<div class="a" style="left:188px;top:294.7px;width:28px;height:28.4px;background:#d9d9d9"></div>
<div class="a" style="left:216px;top:294.7px;width:33px;height:28.4px;background:#ffffff"></div>
<div class="a" style="left:137px;top:322.6px;width:23px;height:28.4px;background:#fcfcfc"></div>
<div class="a" style="left:160px;top:322.6px;width:28px;height:28.4px;background:#fbfbfb"></div>
<div class="a" style="left:188px;top:322.6px;width:28px;height:28.4px;background:#fbfbfb"></div>
<div class="a" style="left:216px;top:322.6px;width:33px;height:28.4px;background:#fcfcfc"></div>
<div class="a" style="left:137px;top:350.6px;width:23px;height:28.4px;background:#ebebeb"></div>
<div class="a" style="left:160px;top:350.6px;width:28px;height:28.4px;background:#d6d6d6"></div>
<div class="a" style="left:188px;top:350.6px;width:28px;height:28.4px;background:#dcdcdc"></div>
<div class="a" style="left:216px;top:350.6px;width:33px;height:28.4px;background:#ffffff"></div>
<div class="a" style="left:137px;top:378.5px;width:23px;height:28.4px;background:#fdfdfd"></div>
<div class="a" style="left:160px;top:378.5px;width:28px;height:28.4px;background:#fdfdfd"></div>
<div class="a" style="left:188px;top:378.5px;width:28px;height:28.4px;background:#fdfdfd"></div>
<div class="a" style="left:216px;top:378.5px;width:33px;height:28.4px;background:#fdfdfd"></div>
<div class="a" style="left:137px;top:406.5px;width:23px;height:28.4px;background:#e8e8e8"></div>
<div class="a" style="left:160px;top:406.5px;width:28px;height:28.4px;background:#e8e8e8"></div>
<div class="a" style="left:188px;top:406.5px;width:28px;height:28.4px;background:#f2f2f2"></div>
<div class="a" style="left:216px;top:406.5px;width:33px;height:28.4px;background:#ffffff"></div>
<div class="a" style="left:137px;top:434.4px;width:23px;height:28.4px;background:#fdfdfd"></div>
<div class="a" style="left:160px;top:434.4px;width:28px;height:28.4px;background:#fdfdfd"></div>
<div class="a" style="left:188px;top:434.4px;width:28px;height:28.4px;background:#fdfdfd"></div>
<div class="a" style="left:216px;top:434.4px;width:33px;height:28.4px;background:#fdfdfd"></div>
<div class="a" style="left:137px;top:462.4px;width:23px;height:28.4px;background:#e3e3e3"></div>
<div class="a" style="left:160px;top:462.4px;width:28px;height:28.4px;background:#d9dada"></div>
<div class="a" style="left:188px;top:462.4px;width:28px;height:28.4px;background:#ffffff"></div>
<div class="a" style="left:216px;top:462.4px;width:33px;height:28.4px;background:#ffffff"></div>
<div class="a" style="left:137px;top:490.4px;width:23px;height:28.4px;background:#fdfdfd"></div>
<div class="a" style="left:160px;top:490.4px;width:28px;height:28.4px;background:#fdfdfd"></div>
<div class="a" style="left:188px;top:490.4px;width:28px;height:28.4px;background:#fdfdfd"></div>
<div class="a" style="left:216px;top:490.4px;width:33px;height:28.4px;background:#fdfdfd"></div>
<div class="a" style="left:137px;top:518.3px;width:23px;height:28.4px;background:#e6e6e6"></div>
<div class="a" style="left:160px;top:518.3px;width:28px;height:28.4px;background:#d6d6d6"></div>
<div class="a" style="left:188px;top:518.3px;width:28px;height:28.4px;background:#dcdcdc"></div>
<div class="a" style="left:216px;top:518.3px;width:33px;height:28.4px;background:#ffffff"></div>
<div class="a" style="left:137px;top:546.2px;width:23px;height:28.4px;background:#fafafa"></div>
<div class="a" style="left:160px;top:546.2px;width:28px;height:28.4px;background:#f6f6f6"></div>
<div class="a" style="left:188px;top:546.2px;width:28px;height:28.4px;background:#fafafa"></div>
<div class="a" style="left:216px;top:546.2px;width:33px;height:28.4px;background:#fdfdfd"></div>
<div class="a" style="left:137px;top:574.2px;width:23px;height:28.4px;background:#ebebeb"></div>
<div class="a" style="left:160px;top:574.2px;width:28px;height:28.4px;background:#ebebeb"></div>
<div class="a" style="left:188px;top:574.2px;width:28px;height:28.4px;background:#f3f3f3"></div>
<div class="a" style="left:216px;top:574.2px;width:33px;height:28.4px;background:#ffffff"></div>
<div class="a" style="left:137px;top:602.1px;width:23px;height:28.4px;background:#fafafa"></div>
<div class="a" style="left:160px;top:602.1px;width:28px;height:28.4px;background:#fdfdfd"></div>
<div class="a" style="left:188px;top:602.1px;width:28px;height:28.4px;background:#fdfdfd"></div>
<div class="a" style="left:216px;top:602.1px;width:33px;height:28.4px;background:#fcfcfc"></div>
<div class="a" style="left:137px;top:630.1px;width:23px;height:28.4px;background:#f6f6f6"></div>
<div class="a" style="left:160px;top:630.1px;width:28px;height:28.4px;background:#ebebeb"></div>
<div class="a" style="left:188px;top:630.1px;width:28px;height:28.4px;background:#e3e3e3"></div>
<div class="a" style="left:216px;top:630.1px;width:33px;height:28.4px;background:#ffffff"></div>
<div class="a" style="left:137px;top:658.0px;width:23px;height:28.4px;background:#fbfbfb"></div>
<div class="a" style="left:160px;top:658.0px;width:28px;height:28.4px;background:#f9f9f9"></div>
<div class="a" style="left:188px;top:658.0px;width:28px;height:28.4px;background:#f9f9f9"></div>
<div class="a" style="left:216px;top:658.0px;width:33px;height:28.4px;background:#fcfcfc"></div>
<div class="a" style="left:137px;top:686.0px;width:23px;height:28.4px;background:#e9e9e9"></div>
<div class="a" style="left:160px;top:686.0px;width:28px;height:28.4px;background:#e9eaea"></div>
<div class="a" style="left:188px;top:686.0px;width:28px;height:28.4px;background:#f4f4f4"></div>
<div class="a" style="left:216px;top:686.0px;width:33px;height:28.4px;background:#ffffff"></div>
<div class="a" style="left:137px;top:714.0px;width:23px;height:28.4px;background:#fafafa"></div>
<div class="a" style="left:160px;top:714.0px;width:28px;height:28.4px;background:#fcfcfc"></div>
<div class="a" style="left:188px;top:714.0px;width:28px;height:28.4px;background:#fcfcfc"></div>
<div class="a" style="left:216px;top:714.0px;width:33px;height:28.4px;background:#fcfcfc"></div>
<div class="a" style="left:137px;top:741.9px;width:23px;height:28.4px;background:#ebebeb"></div>
<div class="a" style="left:160px;top:741.9px;width:28px;height:28.4px;background:#ededed"></div>
<div class="a" style="left:188px;top:741.9px;width:28px;height:28.4px;background:#f3f3f3"></div>
<div class="a" style="left:216px;top:741.9px;width:33px;height:28.4px;background:#ffffff"></div>
<div class="a" style="left:137px;top:769.8px;width:23px;height:28.4px;background:#f8f8f8"></div>
<div class="a" style="left:160px;top:769.8px;width:28px;height:28.4px;background:#fcfcfc"></div>
<div class="a" style="left:188px;top:769.8px;width:28px;height:28.4px;background:#fcfcfc"></div>
<div class="a" style="left:216px;top:769.8px;width:33px;height:28.4px;background:#ffffff"></div>
<div class="a" style="left:137px;top:797.8px;width:23px;height:28.4px;background:#ececec"></div>
<div class="a" style="left:160px;top:797.8px;width:28px;height:28.4px;background:#e8e8e8"></div>
<div class="a" style="left:188px;top:797.8px;width:28px;height:28.4px;background:#ebebeb"></div>
<div class="a" style="left:216px;top:797.8px;width:33px;height:28.4px;background:#fdfdfd"></div>
<div class="a" style="left:137px;top:825.8px;width:23px;height:28.4px;background:#f2f2f0"></div>
<div class="a" style="left:160px;top:825.8px;width:28px;height:28.4px;background:#ececec"></div>
<div class="a" style="left:188px;top:825.8px;width:28px;height:28.4px;background:#edeeee"></div>
<div class="a" style="left:216px;top:825.8px;width:33px;height:28.4px;background:#ffffff"></div>
<div class="a" style="left:137px;top:853.7px;width:23px;height:28.4px;background:#f1f1f1"></div>
<div class="a" style="left:160px;top:853.7px;width:28px;height:28.4px;background:#f3f3f3"></div>
<div class="a" style="left:188px;top:853.7px;width:28px;height:28.4px;background:#f7f7f7"></div>
<div class="a" style="left:216px;top:853.7px;width:33px;height:28.4px;background:#fdfdfd"></div>
<div class="a" style="left:137px;top:881.6px;width:23px;height:28.4px;background:#f1f1f1"></div>
<div class="a" style="left:160px;top:881.6px;width:28px;height:28.4px;background:#f2f2f2"></div>
<div class="a" style="left:188px;top:881.6px;width:28px;height:28.4px;background:#f6f6f6"></div>
<div class="a" style="left:216px;top:881.6px;width:33px;height:28.4px;background:#fdfdfd"></div>
<div class="a" style="left:137px;top:909.6px;width:23px;height:28.4px;background:#f2f2f2"></div>
<div class="a" style="left:160px;top:909.6px;width:28px;height:28.4px;background:#f4f4f4"></div>
<div class="a" style="left:188px;top:909.6px;width:28px;height:28.4px;background:#f8f8f8"></div>
<div class="a" style="left:216px;top:909.6px;width:33px;height:28.4px;background:#fdfdfd"></div>
<div class="a" style="left:137px;top:937.5px;width:23px;height:12.5px;background:#ededed"></div>
<div class="a" style="left:160px;top:937.5px;width:28px;height:12.5px;background:#f0f0f0"></div>
<div class="a" style="left:188px;top:937.5px;width:28px;height:12.5px;background:#f4f4f4"></div>
<div class="a" style="left:147px;top:951px;width:5px;height:2px;background:#444"></div>
<div class="a" style="left:157px;top:951px;width:5px;height:2px;background:#444"></div>
<div class="a" style="left:177.5px;top:951px;width:2px;height:2px;background:#444"></div>
<div class="a" style="left:196.5px;top:951px;width:2px;height:2px;background:#444"></div>
<div class="a" style="left:54px;top:1004px;width:338px;height:50px;border:1px solid #ddd;border-radius:6px"></div>
<div class="a" style="left:102px;top:1004px;width:49px;height:50px;background:#337ab7"></div>
<div class="a" style="left:198px;top:1005px;width:1px;height:48px;background:#ddd"></div>
<div class="a" style="left:246px;top:1005px;width:1px;height:48px;background:#ddd"></div>
<div class="a" style="left:294px;top:1005px;width:1px;height:48px;background:#ddd"></div>
<div class="a" style="left:343px;top:1005px;width:1px;height:48px;background:#ddd"></div>
<div class="a t" style="left:58.0px;top:1017.2px;width:40px;text-align:center;color:#337ab7">«</div>
<div class="a t" style="left:106.2px;top:1017.2px;width:40px;text-align:center;color:#fff">1</div>
<div class="a t" style="left:154.7px;top:1017.2px;width:40px;text-align:center;color:#337ab7">2</div>
<div class="a t" style="left:202.3px;top:1017.2px;width:40px;text-align:center;color:#337ab7">3</div>
<div class="a t" style="left:250.6px;top:1017.2px;width:40px;text-align:center;color:#337ab7">4</div>
<div class="a t" style="left:299.5px;top:1017.2px;width:40px;text-align:center;color:#337ab7">5</div>
<div class="a t" style="left:347.7px;top:1017.2px;width:40px;text-align:center;color:#337ab7">»</div>
<div class="a" style="left:1701px;top:1079.2px;font-size:14.8px;line-height:20px;color:#888;white-space:nowrap">CSDN @<span style="font-size:16px">三分梦~</span></div>
</body></html>
